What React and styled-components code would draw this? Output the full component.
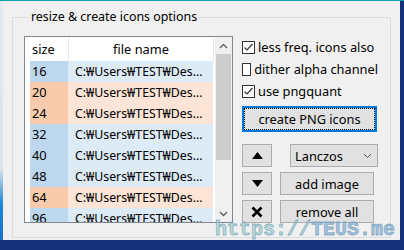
import styled, { createGlobalStyle } from "styled-components";

const GlobalStyle = createGlobalStyle`
  html, body {
    margin: 0;
    padding: 0;
  }
  body {
    width: 404px;
    height: 250px;
    overflow: hidden;
    font-family: "Noto Sans", "Noto Sans CJK KR", sans-serif;
    font-size: 12.8px;
    color: #000;
  }
`;

const ROWS = [
  { size: 16, tone: "blue" },
  { size: 20, tone: "orange" },
  { size: 24, tone: "orange" },
  { size: 32, tone: "blue" },
  { size: 40, tone: "blue" },
  { size: 48, tone: "blue" },
  { size: 64, tone: "orange" },
  { size: 96, tone: "blue" },
];

const TONES = {
  blue: { size: "#bdd7ee", file: "#ddebf7" },
  orange: { size: "#f8cbad", file: "#fce4d6" },
};

const OPTIONS = [
  { label: "less freq. icons also", checked: true },
  { label: "dither alpha channel", checked: false },
  { label: "use pngquant", checked: true },
];

function App() {
  return (
    <Desktop>
      <GlobalStyle />
      <LeftEdge />
      <Window>
        <Group>
          <Caption>resize &amp; create icons options</Caption>
          <Body>
            <List>
              <Table>
                <Header>
                  <HeadCell $width={44} $pad={7}>size</HeadCell>
                  <HeadCell $width={145} $center>file name</HeadCell>
                </Header>
                {ROWS.map((row) => (
                  <Row key={row.size}>
                    <SizeCell $tone={row.tone}>{row.size}</SizeCell>
                    <FileCell $tone={row.tone}>C:₩Users₩TEST₩Des...</FileCell>
                  </Row>
                ))}
              </Table>
              <ScrollBar>
                <Arrow>
                  <svg width="9" height="6" viewBox="0 0 9 6">
                    <polyline points="1,5 4.5,1.5 8,5" fill="none" stroke="#606060" strokeWidth="1.4" />
                  </svg>
                </Arrow>
                <Thumb />
                <Track />
                <Arrow>
                  <svg width="9" height="6" viewBox="0 0 9 6">
                    <polyline points="1,1 4.5,4.5 8,1" fill="none" stroke="#606060" strokeWidth="1.4" />
                  </svg>
                </Arrow>
              </ScrollBar>
            </List>

            <Side>
              {OPTIONS.map((opt) => (
                <CheckRow key={opt.label}>
                  <Box>
                    {opt.checked && (
                      <svg width="11" height="11" viewBox="0 0 11 11">
                        <polyline points="1.5,5.5 4,8 9.5,2" fill="none" stroke="#333" strokeWidth="1.2" />
                      </svg>
                    )}
                  </Box>
                  {opt.label}
                </CheckRow>
              ))}
              <CreateButton>create PNG icons</CreateButton>
              <Controls>
                <IconButton>
                  <svg width="11" height="7" viewBox="0 0 11 7">
                    <polygon points="5.5,0 11,7 0,7" fill="#000" />
                  </svg>
                </IconButton>
                <Select>
                  Lanczos
                  <svg width="9" height="6" viewBox="0 0 9 6">
                    <polyline points="1,1 4.5,4.5 8,1" fill="none" stroke="#555" strokeWidth="1" />
                  </svg>
                </Select>
                <IconButton>
                  <svg width="11" height="7" viewBox="0 0 11 7">
                    <polygon points="0,0 11,0 5.5,7" fill="#000" />
                  </svg>
                </IconButton>
                <Button>add image</Button>
                <IconButton>
                  <svg width="12" height="12" viewBox="0 0 12 12">
                    <path d="M1.5 1.5 L10.5 10.5 M10.5 1.5 L1.5 10.5" stroke="#000" strokeWidth="2.6" />
                  </svg>
                </IconButton>
                <Button>remove all</Button>
              </Controls>
            </Side>
          </Body>
        </Group>
      </Window>
      <Watermark>
        <span>https://</span>
        <Brand>TEUS.me</Brand>
      </Watermark>
    </Desktop>
  );
}

export default App;

const Desktop = styled.div`
  position: relative;
  display: flex;
  width: 404px;
  height: 250px;
  box-sizing: border-box;
  border-top: 1px solid #12a0a6;
  background: #17307c;
`;

const LeftEdge = styled.div`
  width: 3px;
  height: 239px;
  background: linear-gradient(#e3e8ec 0%, #dde4ea 70%, #1f86d4 85%, #1a6fc4 100%);
`;

const Window = styled.div`
  width: 397px;
  height: 239px;
  background: #f0f0f0;
`;

const Group = styled.fieldset`
  box-sizing: border-box;
  margin: 9px 0 0 9px;
  padding: 12px 0 0 11px;
  width: 379px;
  height: 228px;
  border: 1px solid #dcdcdc;
`;

const Caption = styled.legend`
  margin-left: 6px;
  padding: 0 1px;
  line-height: 14px;
  font-size: 12.4px;
`;

const Body = styled.div`
  display: flex;
  gap: 9px;
`;

const List = styled.div`
  display: flex;
  width: 209px;
  height: 187px;
  box-sizing: border-box;
  border: 1px solid #828790;
  background: #fff;
`;

const Table = styled.div`
  width: 190px;
  overflow: hidden;
`;

const Header = styled.div`
  display: flex;
  height: 24px;
`;

const HeadCell = styled.div`
  box-sizing: border-box;
  width: ${(p) => p.$width}px;
  padding-left: ${(p) => p.$pad || 0}px;
  text-align: ${(p) => (p.$center ? "center" : "left")};
  border-right: 1px solid #e5e5e5;
  line-height: 24px;
`;

const Row = styled.div`
  display: flex;
  height: 21px;
  padding-left: 5px;
  line-height: 21px;
`;

const SizeCell = styled.div`
  width: 38px;
  padding-left: 2px;
  box-sizing: border-box;
  background: ${(p) => TONES[p.$tone].size};
`;

const FileCell = styled.div`
  width: 145px;
  padding-left: 7px;
  box-sizing: border-box;
  font-size: 12.3px;
  white-space: nowrap;
  overflow: hidden;
  background: ${(p) => TONES[p.$tone].file};
`;

const ScrollBar = styled.div`
  display: flex;
  flex-direction: column;
  width: 17px;
  margin-left: 1px;
  background: #f0f0f0;
`;

const Arrow = styled.div`
  display: flex;
  align-items: center;
  justify-content: center;
  height: 17px;
`;

const Thumb = styled.div`
  height: 106px;
  margin: 0 1px;
  background: #cdcdcd;
`;

const Track = styled.div`
  flex: 1;
`;

const Side = styled.div`
  display: flex;
  flex-direction: column;
  width: 136px;
`;

const CheckRow = styled.div`
  display: flex;
  align-items: center;
  gap: 3px;
  height: 22px;
  white-space: nowrap;
`;

const Box = styled.div`
  display: flex;
  align-items: center;
  justify-content: center;
  width: 13px;
  height: 13px;
  box-sizing: border-box;
  border: 1px solid #333;
  background: #fff;
`;

const Button = styled.div`
  display: flex;
  align-items: center;
  justify-content: center;
  box-sizing: border-box;
  width: 94px;
  height: 23px;
  margin-left: 8px;
  border: 1px solid #adadad;
  background: #e1e1e1;
`;

const CreateButton = styled(Button)`
  width: 135px;
  height: 26px;
  margin: 4px 0 0;
  border: 2px solid #0078d7;
  outline: 1px dotted #000;
  outline-offset: -3px;
`;

const Controls = styled.div`
  display: grid;
  grid-template-columns: 30px 1fr;
  row-gap: 5px;
  margin-top: 12px;
`;

const IconButton = styled(Button)`
  width: 30px;
  margin: 0;
`;

const Select = styled(Button)`
  justify-content: space-between;
  width: 88px;
  margin-left: 18px;
  padding: 0 5px 0 4px;
`;

const Watermark = styled.div`
  position: absolute;
  left: 215px;
  top: 219px;
  font-family: "Liberation Mono", monospace;
  font-weight: bold;
  font-size: 20px;
  line-height: 20px;
  color: rgba(170, 215, 205, 0.75);
  -webkit-text-stroke: 0.8px rgba(90, 140, 175, 0.6);
`;

const Brand = styled.span`
  color: rgba(140, 180, 215, 0.75);
`;
